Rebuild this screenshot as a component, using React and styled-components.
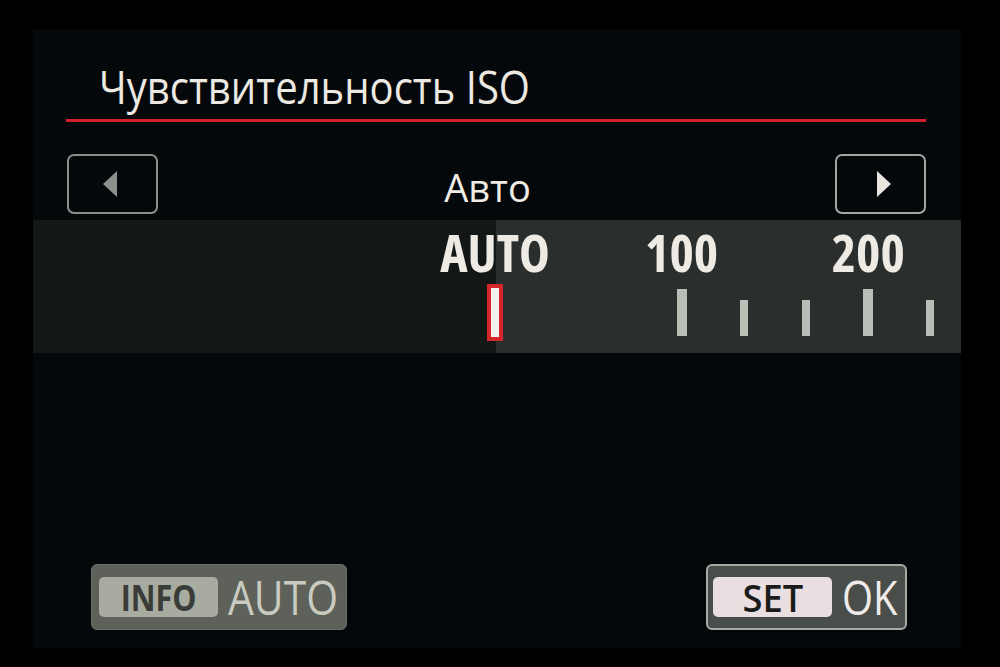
import styled, { createGlobalStyle } from "styled-components";

const GlobalStyle = createGlobalStyle`
  html, body {
    margin: 0;
    padding: 0;
    background: #000;
  }
  body {
    font-family: "Open Sans", "Noto Sans", sans-serif;
  }
`;

const Frame = styled.div`
  width: 1000px;
  height: 667px;
  box-sizing: border-box;
  padding: 29px 0 0 33px;
  background: #000;
`;

const Screen = styled.div`
  width: 928px;
  height: 619px;
  background: #05080b;
  display: flex;
  flex-direction: column;
`;

const Header = styled.div`
  margin: 0 35px 0 33px;
  height: 90px;
  border-bottom: 3px solid #d4202a;
  display: flex;
  align-items: flex-end;
  padding-left: 33px;
`;

// the camera font is narrower than Open Sans, so the glyphs get squeezed
const Title = styled.h1`
  display: inline-block;
  margin: 0 0 10px;
  font-size: 45px;
  font-weight: 400;
  line-height: 1;
  color: #ece9e2;
  white-space: nowrap;
  transform: scaleX(0.89);
  transform-origin: left center;
`;

const NavRow = styled.div`
  margin: 32px 35px 0 34px;
  height: 60px;
  display: flex;
  align-items: center;
`;

const ArrowButton = styled.div`
  width: 91px;
  height: 60px;
  box-sizing: border-box;
  border: 2px solid ${({ $active }) => ($active ? "#a3a6a0" : "#8a8e88")};
  border-radius: 7px;
  display: flex;
  align-items: center;
  justify-content: center;
`;

const Triangle = styled.div`
  width: 0;
  height: 0;
  border-top: 13px solid transparent;
  border-bottom: 13px solid transparent;
  ${({ $dir }) => ($dir === "left" ? "border-right" : "border-left")}: 14px solid
    ${({ $active }) => ($active ? "#e8e4de" : "#8b928d")};
  margin-left: ${({ $dir }) => ($dir === "left" ? "-6px" : "6px")};
`;

const ModeLabel = styled.div`
  flex: 1;
  text-align: center;
  padding: 5px 18px 0 0;
  font-size: 38px;
  line-height: 1;
  color: #f0ece6;
`;

const Band = styled.div`
  margin-top: 6px;
  height: 133px;
  background: linear-gradient(to right, #131715 0 463px, #2a2f2d 463px);
  display: grid;
  grid-template-columns: repeat(8, 62.2px);
  padding-left: 431px;
`;

const Slot = styled.div`
  display: flex;
  flex-direction: column;
  align-items: center;
`;

const ScaleLabel = styled.div`
  height: 64px;
  padding-top: 6px;
  box-sizing: border-box;
  font-size: 52px;
  font-weight: 700;
  font-stretch: 85%;
  line-height: 1;
  color: #eeeae4;
  white-space: nowrap;
`;

const TickArea = styled.div`
  height: 57px;
  display: flex;
  align-items: flex-end;
`;

const Tick = styled.div`
  width: ${({ $major }) => ($major ? 10 : 8)}px;
  height: ${({ $major }) => ($major ? 47 : 36)}px;
  margin-bottom: 5px;
  background: #b9beb7;
`;

const Marker = styled.div`
  width: 8px;
  height: 49px;
  border: 4px solid #d4252b;
  background: #f4f0ee;
`;

const Footer = styled.div`
  margin-top: auto;
  padding: 0 54px 18px 58px;
  display: flex;
  justify-content: space-between;
`;

const KeyButton = styled.div`
  height: 66px;
  box-sizing: border-box;
  padding: 0 ${({ $variant }) => ($variant === "set" ? "10px 0 5px" : "10px 0 7px")};
  width: ${({ $variant }) => ($variant === "set" ? 201 : 256)}px;
  border-radius: 6px;
  border: ${({ $variant }) =>
    $variant === "set" ? "2px solid #a5aca5" : "1px solid #6b6f67"};
  background: ${({ $variant }) => ($variant === "set" ? "#4a4e4b" : "#5d6159")};
  display: flex;
  align-items: center;
  gap: 10px;
`;

const KeyCap = styled.div`
  flex-shrink: 0;
  width: 119px;
  height: 40px;
  border-radius: 5px;
  background: ${({ $variant }) => ($variant === "set" ? "#e9dfe1" : "#a8ab9f")};
  display: flex;
  align-items: center;
  justify-content: center;
`;

const KeyCapText = styled.span`
  display: inline-block;
  font-size: ${({ $variant }) => ($variant === "set" ? 37 : 35)}px;
  font-weight: ${({ $variant }) => ($variant === "set" ? 600 : 700)};
  line-height: 1;
  color: ${({ $variant }) => ($variant === "set" ? "#1b1b1b" : "#393c37")};
  transform: scaleX(${({ $variant }) => ($variant === "set" ? 0.98 : 0.87)});
`;

const KeyText = styled.div`
  flex-shrink: 0;
  font-size: 47px;
  line-height: 1;
  color: ${({ $variant }) => ($variant === "set" ? "#efebe8" : "#c9cbc1")};
  transform: scaleX(${({ $variant }) => ($variant === "set" ? 0.85 : 0.87)});
  transform-origin: left center;
`;

const scale = [
  { label: "AUTO", kind: "marker" },
  { kind: "none" },
  { kind: "none" },
  { label: "100", kind: "major" },
  { kind: "minor" },
  { kind: "minor" },
  { label: "200", kind: "major" },
  { kind: "minor" },
];

export default function App() {
  return (
    <Frame>
      <GlobalStyle />
      <Screen>
        <Header>
          <Title>Чувствительность ISO</Title>
        </Header>
        <NavRow>
          <ArrowButton>
            <Triangle $dir="left" />
          </ArrowButton>
          <ModeLabel>Авто</ModeLabel>
          <ArrowButton $active>
            <Triangle $dir="right" $active />
          </ArrowButton>
        </NavRow>
        <Band>
          {scale.map((s, i) => (
            <Slot key={i}>
              <ScaleLabel>{s.label || "\u00a0"}</ScaleLabel>
              <TickArea>
                {s.kind === "marker" && <Marker />}
                {s.kind === "major" && <Tick $major />}
                {s.kind === "minor" && <Tick />}
              </TickArea>
            </Slot>
          ))}
        </Band>
        <Footer>
          <KeyButton>
            <KeyCap>
              <KeyCapText>INFO</KeyCapText>
            </KeyCap>
            <KeyText>AUTO</KeyText>
          </KeyButton>
          <KeyButton $variant="set">
            <KeyCap $variant="set">
              <KeyCapText $variant="set">SET</KeyCapText>
            </KeyCap>
            <KeyText $variant="set">OK</KeyText>
          </KeyButton>
        </Footer>
      </Screen>
    </Frame>
  );
}
